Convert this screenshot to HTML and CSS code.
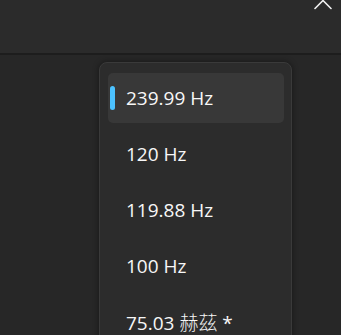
FILE: index.html
```html
<!DOCTYPE html>
<html>
<head>
<meta charset="utf-8">
<link rel="stylesheet" href="styles.css">
</head>
<body>
<header class="header">
  <svg class="chevron" width="20" height="12" viewBox="0 0 20 12"><path d="M2 9.5 L10 1.5 L18 9.5" fill="none" stroke="#f2f2f2" stroke-width="1.6" stroke-linecap="round" stroke-linejoin="round"/></svg>
</header>
<main class="content">
  <div class="popup">
    <div class="item selected"><span class="bar"></span>239.99 Hz</div>
    <div class="item">120 Hz</div>
    <div class="item">119.88 Hz</div>
    <div class="item">100 Hz</div>
    <div class="item">75.03 <span class="cjk">赫茲</span> *</div>
  </div>
</main>
</body>
</html>
```
FILE: styles.css
```css
html, body {
  margin: 0;
  height: 100%;
  overflow: hidden;
}
body {
  background: #272727;
  font-family: "Open Sans", "Noto Sans CJK TC", sans-serif;
  color: #f7f7f7;
}
.header {
  height: 53px;
  background: #2b2b2b;
  border-bottom: 2px solid #1d1d1d;
  display: flex;
  justify-content: flex-end;
  align-items: flex-start;
  padding-right: 8px;
}
.chevron {
  display: block;
  margin-top: -1px;
}
.content {
  padding: 7px 0 0 99px;
}
.popup {
  box-sizing: border-box;
  width: 193px;
  background: #2c2c2c;
  border: 1px solid #3a3a3a;
  border-radius: 8px;
  box-shadow: 0 0 6px rgba(0,0,0,0.45);
  padding: 10px 7px 10px 8px;
  display: flex;
  flex-direction: column;
  gap: 6px;
}
.item {
  position: relative;
  height: 50px;
  line-height: 50px;
  padding-left: 18px;
  font-size: 19px;
  border-radius: 5px;
  white-space: nowrap;
}
.item.selected {
  background: #383838;
}
.cjk {
  font-family: "Noto Sans CJK TC", sans-serif;
  font-weight: 300;
}
.bar {
  position: absolute;
  left: 2px;
  top: 13px;
  width: 5px;
  height: 24px;
  border-radius: 3px;
  background: #4cc2ff;
}
```
